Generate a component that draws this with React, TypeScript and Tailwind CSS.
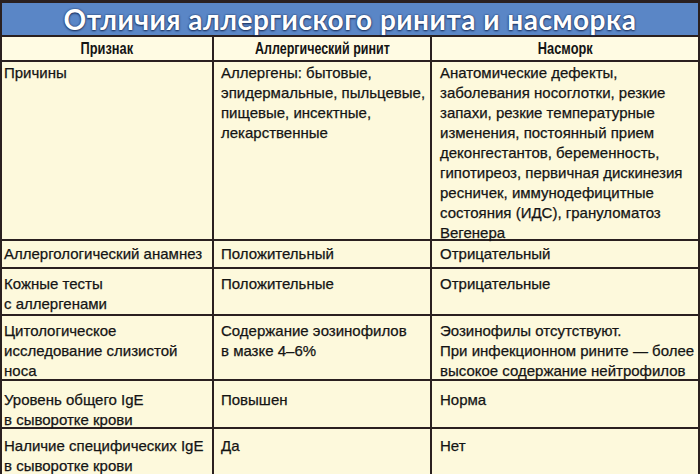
const rows = [
  {
    h: "h-[179px]",
    pt: "pt-[1px]",
    sign: ["Причины"],
    allergic: ["Аллергены: бытовые,", "эпидермальные, пыльцевые,", "пищевые, инсектные,", "лекарственные"],
    cold: [
      "Анатомические дефекты,",
      "заболевания носоглотки, резкие",
      "запахи, резкие температурные",
      "изменения, постоянный прием",
      "деконгестантов, беременность,",
      "гипотиреоз, первичная дискинезия",
      "ресничек, иммунодефицитные",
      "состояния (ИДС), грануломатоз",
      "Вегенера",
    ],
  },
  {
    h: "h-[28px]",
    pt: "pt-[3px]",
    sign: ["Аллергологический анамнез"],
    allergic: ["Положительный"],
    cold: ["Отрицательный"],
  },
  {
    h: "h-[47px]",
    pt: "pt-[5px]",
    sign: ["Кожные тесты", "с аллергенами"],
    allergic: ["Положительные"],
    cold: ["Отрицательные"],
  },
  {
    h: "h-[65px]",
    pt: "pt-[5px]",
    sign: ["Цитологическое", "исследование слизистой", "носа"],
    allergic: ["Содержание эозинофилов", "в мазке 4–6%"],
    cold: ["Эозинофилы отсутствуют.", "При инфекционном рините — более", "высокое содержание нейтрофилов"],
  },
  {
    h: "h-[48px]",
    pt: "pt-[9px]",
    sign: ["Уровень общего IgE", "в сыворотке крови"],
    allergic: ["Повышен"],
    cold: ["Норма"],
  },
  {
    h: "h-[46px]",
    pt: "pt-[7px]",
    sign: ["Наличие специфических IgE", "в сыворотке крови"],
    allergic: ["Да"],
    cold: ["Нет"],
  },
];

function Lines({ lines }: { lines: string[] }) {
  return (
    <>
      {lines.map((l) => (
        <div key={l} className="whitespace-nowrap">
          {l}
        </div>
      ))}
    </>
  );
}

export default function App() {
  return (
    <div className="w-[700px] h-[474px] overflow-hidden bg-[#fdf9dc] border-x-2 border-t-[3px] border-[#2a2020] font-['Liberation_Sans',Arial,sans-serif] text-[#141414]">
      {/* title */}
      <div className="h-[32px] bg-[#5a86c6] flex items-center justify-center">
        <h1 className="font-['Lato',sans-serif] font-bold text-[28px] leading-none text-white tracking-[0.5px] [text-shadow:0_0_2px_#1a2f5c,0_1px_2px_#1a2f5c]">
          Отличия аллергиского ринита и насморка
        </h1>
      </div>

      {/* header */}
      <div className="flex h-[27px] border-y-2 border-[#2a2020] bg-[#fffbe3] font-bold text-[16px]">
        <div className="w-[212px] border-r-2 border-[#2a2020] flex items-center justify-center">
          <span className="inline-block scale-x-[0.8]">Признак</span>
        </div>
        <div className="w-[218px] border-r-2 border-[#2a2020] flex items-center justify-center">
          <span className="inline-block scale-x-[0.78] whitespace-nowrap">Аллергический ринит</span>
        </div>
        <div className="flex-1 flex items-center justify-center">
          <span className="inline-block scale-x-[0.8]">Насморк</span>
        </div>
      </div>

      {rows.map((r, i) => (
        <div
          key={i}
          className={`flex ${r.h} ${r.pt} ${i < rows.length - 1 ? "border-b-2" : ""} border-[#2a2020] text-[15px] leading-[20px] [-webkit-text-stroke:0.25px_#141414]`}
        >
          <div className="w-[212px] border-r-2 border-[#2a2020] pl-[2px] -mt-[12px] pt-[12px]">
            <Lines lines={r.sign} />
          </div>
          <div className="w-[218px] border-r-2 border-[#2a2020] pl-[7px] -mt-[12px] pt-[12px]">
            <Lines lines={r.allergic} />
          </div>
          <div className="flex-1 pl-[8px] -mt-[12px] pt-[12px]">
            <Lines lines={r.cold} />
          </div>
        </div>
      ))}
    </div>
  );
}
